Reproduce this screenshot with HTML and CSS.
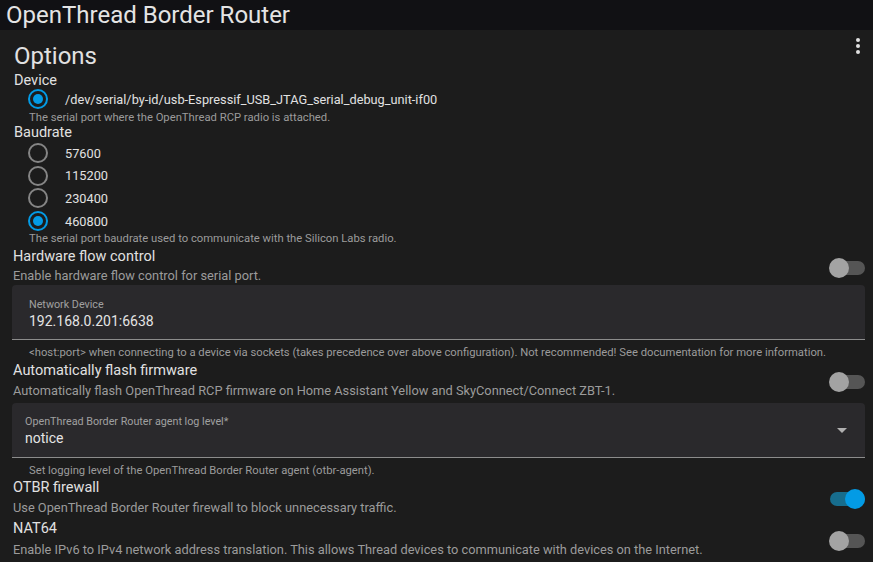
FILE: index.html
```html
<!DOCTYPE html>
<html>
<head>
<meta charset="utf-8">
<link rel="stylesheet" href="styles.css">
</head>
<body>
<div class="header">OpenThread Border Router</div>
<div class="content">
  <div class="card-head">
    <div class="options">Options</div>
    <div class="menu"><span></span><span></span><span></span></div>
  </div>

  <div class="group-label">Device</div>
  <div class="radio-row"><span class="radio checked"></span><span class="radio-text">/dev/serial/by-id/usb-Espressif_USB_JTAG_serial_debug_unit-if00</span></div>
  <div class="help">The serial port where the OpenThread RCP radio is attached.</div>

  <div class="group-label baud">Baudrate</div>
  <div class="radio-row"><span class="radio"></span><span class="radio-text">57600</span></div>
  <div class="radio-row"><span class="radio"></span><span class="radio-text">115200</span></div>
  <div class="radio-row"><span class="radio"></span><span class="radio-text">230400</span></div>
  <div class="radio-row"><span class="radio checked"></span><span class="radio-text">460800</span></div>
  <div class="help">The serial port baudrate used to communicate with the Silicon Labs radio.</div>

  <div class="switch-row r-hfc">
    <div class="switch-text">
      <div class="title">Hardware flow control</div>
      <div class="desc">Enable hardware flow control for serial port.</div>
    </div>
    <span class="switch"><span class="track"></span><span class="thumb"></span></span>
  </div>

  <div class="field net">
    <div class="field-label">Network Device</div>
    <div class="field-value">192.168.0.201:6638</div>
  </div>
  <div class="help field-help">&lt;host:port&gt; when connecting to a device via sockets (takes precedence over above configuration). Not recommended! See documentation for more information.</div>

  <div class="switch-row r-flash">
    <div class="switch-text">
      <div class="title">Automatically flash firmware</div>
      <div class="desc">Automatically flash OpenThread RCP firmware on Home Assistant Yellow and SkyConnect/Connect ZBT-1.</div>
    </div>
    <span class="switch"><span class="track"></span><span class="thumb"></span></span>
  </div>

  <div class="field select">
    <div class="field-label">OpenThread Border Router agent log level*</div>
    <div class="field-value">notice</div>
    <span class="arrow"></span>
  </div>
  <div class="help field-help">Set logging level of the OpenThread Border Router agent (otbr-agent).</div>

  <div class="switch-row r-fw">
    <div class="switch-text">
      <div class="title">OTBR firewall</div>
      <div class="desc">Use OpenThread Border Router firewall to block unnecessary traffic.</div>
    </div>
    <span class="switch on"><span class="track"></span><span class="thumb"></span></span>
  </div>

  <div class="switch-row r-nat">
    <div class="switch-text">
      <div class="title">NAT64</div>
      <div class="desc">Enable IPv6 to IPv4 network address translation. This allows Thread devices to communicate with devices on the Internet.</div>
    </div>
    <span class="switch"><span class="track"></span><span class="thumb"></span></span>
  </div>
</div>
</body>
</html>
```

FILE: styles.css
```css
html, body {
  margin: 0;
  padding: 0;
  background: #1c1c1c;
  font-family: Roboto, "Noto Sans", sans-serif;
  color: #e1e1e1;
  overflow: hidden;
}

.header {
  height: 30px;
  line-height: 30px;
  background: #111114;
  font-size: 24px;
  padding-left: 6px;
  color: #e4e4e4;
  white-space: nowrap;
}

.content {
  padding: 12px 8px 0 12px;
}

.card-head {
  display: flex;
  justify-content: space-between;
  align-items: flex-start;
}

.options {
  font-size: 24px;
  line-height: 28px;
  height: 28px;
  padding-left: 2px;
}

.menu {
  display: flex;
  flex-direction: column;
  gap: 2px;
  margin-top: -4px;
  margin-right: 5px;
}

.menu span {
  width: 4px;
  height: 4px;
  border-radius: 50%;
  background: #e1e1e1;
}

.group-label {
  font-size: 14.5px;
  height: 18px;
  line-height: 22px;
  padding-left: 2px;
}

.group-label.baud {
  height: 18px;
  line-height: 18px;
}

.radio-row {
  display: flex;
  align-items: center;
  height: 22.7px;
}

.radio {
  box-sizing: border-box;
  width: 20px;
  height: 20px;
  border-radius: 50%;
  border: 2px solid #858585;
  margin-left: 16px;
  margin-right: 17px;
  position: relative;
  flex: none;
}

.radio.checked {
  border-color: #039be5;
}

.radio.checked::after {
  content: "";
  position: absolute;
  left: 3px;
  top: 3px;
  width: 10px;
  height: 10px;
  border-radius: 50%;
  background: #039be5;
}

.radio-text {
  font-size: 12.75px;
  color: #e1e1e1;
}

.help {
  font-size: 11.25px;
  line-height: 13px;
  color: #9b9b9b;
  padding-left: 17px;
  white-space: nowrap;
}

.switch-row {
  display: flex;
  align-items: center;
  justify-content: space-between;
}

.title {
  font-size: 14.5px;
  line-height: 21px;
  padding-left: 1px;
}

.desc {
  font-size: 12.8px;
  line-height: 20px;
  color: #9b9b9b;
  padding-left: 1px;
  white-space: nowrap;
}

.r-hfc .title {
  padding-top: 1px;
}

.r-hfc .desc {
  line-height: 18px;
}

.r-flash .title {
  padding-top: 1px;
}

.r-flash {
  margin-bottom: 2px;
}

.r-nat .desc {
  padding-top: 1px;
}

.switch {
  position: relative;
  width: 36px;
  height: 20px;
  flex: none;
  margin-top: 3px;
}

.r-hfc .switch {
  margin-top: 5px;
}

.switch .track {
  position: absolute;
  left: 1px;
  right: 0;
  top: 3px;
  height: 14px;
  border-radius: 7px;
  background: #555555;
}

.switch .thumb {
  position: absolute;
  left: 0;
  top: 0;
  width: 20px;
  height: 20px;
  border-radius: 50%;
  background: #a3a3a3;
}

.switch.on .track {
  background: #176d8d;
}

.switch.on .thumb {
  left: auto;
  right: 0;
  background: #039be5;
}

.field {
  position: relative;
  height: 55px;
  background: #2a292c;
  border-bottom: 1px solid #8c8c8c;
  border-radius: 4px 4px 0 0;
  padding-left: 13px;
  box-sizing: border-box;
}

.field.net {
  padding-left: 17px;
}

.field-label {
  font-size: 10.75px;
  color: #a0a0a0;
  padding-top: 13px;
  line-height: 13px;
}

.field-value {
  font-size: 14px;
  line-height: 20px;
  color: #e4e4e4;
}

.field.select .field-label {
  padding-top: 12px;
}

.field-help {
  padding-top: 6px;
  line-height: 13px;
}

.arrow {
  position: absolute;
  right: 18px;
  top: 25px;
  width: 0;
  height: 0;
  border-left: 5px solid transparent;
  border-right: 5px solid transparent;
  border-top: 5px solid #b0b0b0;
}
```
